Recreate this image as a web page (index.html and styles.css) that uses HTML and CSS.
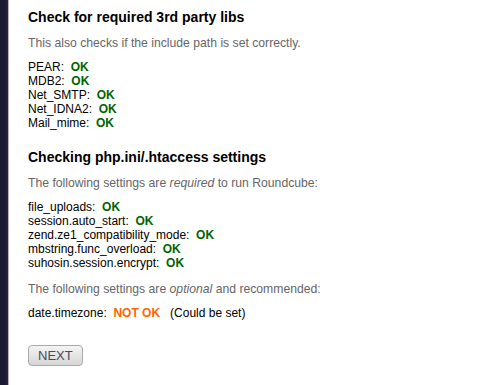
FILE: index.html
```html
<!DOCTYPE html>
<html>
<head>
<meta charset="utf-8">
<link rel="stylesheet" href="styles.css">
</head>
<body>
<div class="window">
  <div class="page">
    <h3>Check for required 3rd party libs</h3>
    <p class="hint">This also checks if the include path is set correctly.</p>
    <div class="list">
      <div>PEAR:&nbsp; <span class="success">OK</span></div>
      <div>MDB2:&nbsp; <span class="success">OK</span></div>
      <div>Net_SMTP:&nbsp; <span class="success">OK</span></div>
      <div>Net_IDNA2:&nbsp; <span class="success">OK</span></div>
      <div>Mail_mime:&nbsp; <span class="success">OK</span></div>
    </div>

    <h3>Checking php.ini/.htaccess settings</h3>
    <p class="hint">The following settings are <em>required</em> to run Roundcube:</p>
    <div class="list">
      <div>file_uploads:&nbsp; <span class="success">OK</span></div>
      <div>session.auto_start:&nbsp; <span class="success">OK</span></div>
      <div>zend.ze1_compatibility_mode:&nbsp; <span class="success">OK</span></div>
      <div>mbstring.func_overload:&nbsp; <span class="success">OK</span></div>
      <div>suhosin.session.encrypt:&nbsp; <span class="success">OK</span></div>
    </div>
    <p class="hint">The following settings are <em>optional</em> and recommended:</p>
    <div class="list">
      <div>date.timezone:&nbsp; <span class="na">NOT OK</span>&nbsp;&nbsp; (Could be set)</div>
    </div>
    <div class="actions">
      <button class="btn" type="button">NEXT</button>
    </div>
  </div>
</div>
</body>
</html>
```
FILE: styles.css
```css
html, body {
  margin: 0;
  padding: 0;
  height: 100%;
}
body {
  background: #1b1a33;
  font-family: "Liberation Sans", Arial, sans-serif;
  font-size: 12px;
  color: #000;
}
.window {
  margin-left: 6px;
  border-left: 2px solid #2c1f3d;
  height: 100%;
}
.page {
  border-left: 1px solid #b4b4b4;
  background: #fff;
  height: 100%;
  padding: 9px 19px 0;
  box-sizing: border-box;
}
h3 {
  font-size: 14px;
  font-weight: bold;
  margin: 19px 0 11px;
}
h3:first-child {
  margin-top: 0;
}
.hint {
  color: #666;
  font-size: 12.2px;
  margin: 0 0 10px;
}
.list {
  margin-bottom: 12px;
}
.success {
  color: #006400;
  font-weight: bold;
}
.na {
  color: #f60;
  font-weight: bold;
}
.actions {
  margin-top: 25px;
}
.btn {
  font-family: "Liberation Sans", Arial, sans-serif;
  font-size: 13px;
  color: #4a4a55;
  padding: 2px 9px;
  border: 1px solid #aaa;
  border-radius: 4px;
  background: linear-gradient(#f4f4f4, #d6d6d6);
}
```
